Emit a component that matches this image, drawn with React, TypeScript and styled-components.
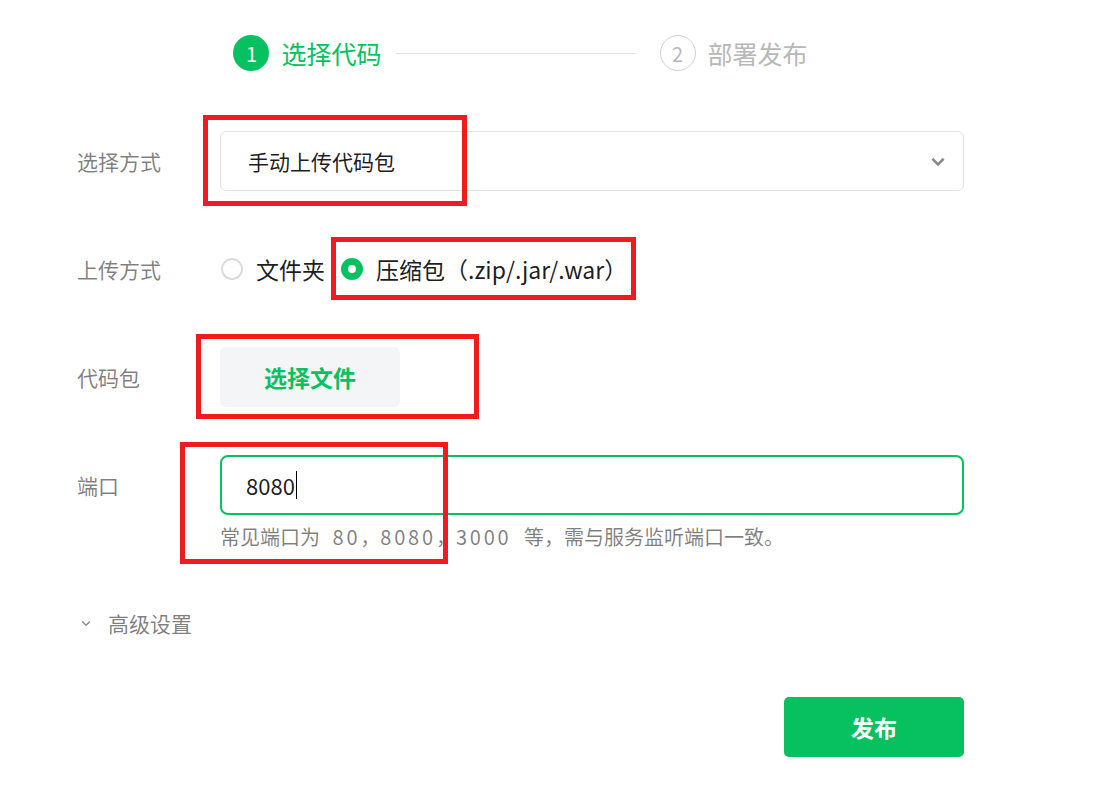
import React from 'react'
import styled, { createGlobalStyle } from 'styled-components'

const GlobalStyle = createGlobalStyle`
  body {
    margin: 0;
    background: #fff;
    font-family: "Noto Sans CJK SC", "Noto Sans", "Liberation Sans", sans-serif;
    color: rgba(0, 0, 0, 0.9);
  }
`

const Page = styled.div`
  position: relative;
  width: 1112px;
  height: 810px;
  overflow: hidden;
`

const Form = styled.div`
  width: 887px;
  padding: 35px 0 0 77px;
  display: flex;
  flex-direction: column;
`

const Steps = styled.div`
  display: flex;
  align-items: center;
  justify-content: center;
  height: 36px;
  margin-bottom: 60px;
`

const StepDot = styled.span<{ $active?: boolean }>`
  width: 36px;
  height: 36px;
  box-sizing: border-box;
  border-radius: 50%;
  display: flex;
  align-items: center;
  justify-content: center;
  font-size: 20px;
  background: ${(p) => (p.$active ? '#07c160' : '#fff')};
  border: ${(p) => (p.$active ? 'none' : '1.5px solid #d2d2d2')};
  color: ${(p) => (p.$active ? '#fff' : '#b8b8b8')};
`

const StepTitle = styled.span<{ $active?: boolean }>`
  font-size: 25px;
  margin-left: 12px;
  color: ${(p) => (p.$active ? '#07c160' : '#b8b8b8')};
`

const StepLine = styled.span`
  width: 239px;
  height: 1px;
  background: #e3e3e3;
  margin: 0 25px 0 14px;
`

const Row = styled.div<{ $last?: boolean }>`
  display: flex;
  align-items: flex-start;
  margin-bottom: ${(p) => (p.$last ? 0 : 48)}px;
`

const Label = styled.div`
  width: 143px;
  flex-shrink: 0;
  height: 60px;
  line-height: 60px;
  font-size: 21px;
  color: rgba(0, 0, 0, 0.5);
`

const Field = styled.div`
  flex: 1;
  display: flex;
  flex-direction: column;
`

const Select = styled.div`
  height: 60px;
  box-sizing: border-box;
  border: 1px solid #e4e4e4;
  border-radius: 6px;
  display: flex;
  align-items: center;
  justify-content: space-between;
  padding: 0 16px 0 27px;
  font-size: 21px;
`

const RadioGroup = styled.div`
  height: 60px;
  display: flex;
  align-items: center;
`

const RadioItem = styled.label`
  display: flex;
  align-items: center;
  font-size: 23px;
  margin-right: 15px;
`

const RadioCircle = styled.span<{ $checked?: boolean }>`
  width: 22px;
  height: 22px;
  box-sizing: border-box;
  border-radius: 50%;
  margin: 0 13px 0 1px;
  border: ${(p) => (p.$checked ? '7px solid #07c160' : '2px solid #dcdcdc')};
  background: #fff;
`

const FileButton = styled.button`
  width: 180px;
  height: 60px;
  border: none;
  border-radius: 6px;
  background: #f4f5f7;
  color: #07c160;
  font-family: inherit;
  font-size: 23px;
  font-weight: 700;
`

const Input = styled.div`
  height: 60px;
  box-sizing: border-box;
  border: 2px solid #07c160;
  border-radius: 8px;
  display: flex;
  align-items: center;
  padding-left: 24px;
  font-size: 22px;
`

const Caret = styled.span`
  width: 1.5px;
  height: 28px;
  background: #000;
  margin-left: 1px;
`

const Help = styled.div`
  margin-top: 10px;
  line-height: 24px;
  font-size: 20px;
  word-spacing: 8px;
  color: rgba(0, 0, 0, 0.5);
`

const Num = styled.span`
  letter-spacing: 2.8px;
`

const Advanced = styled.div`
  display: flex;
  align-items: center;
  height: 30px;
  margin-top: 59px;
  font-size: 21px;
  color: rgba(0, 0, 0, 0.5);
  gap: 16px;
  padding-left: 3px;
`

const Footer = styled.div`
  display: flex;
  justify-content: flex-end;
  margin-top: 59px;
`

const Primary = styled.button`
  width: 180px;
  height: 60px;
  border: none;
  border-radius: 5px;
  background: #07c160;
  color: #fff;
  font-family: inherit;
  font-size: 23px;
  font-weight: 700;
`

const Mark = styled.div<{ $x: number; $y: number; $w: number; $h: number }>`
  position: absolute;
  left: ${(p) => p.$x}px;
  top: ${(p) => p.$y}px;
  width: ${(p) => p.$w}px;
  height: ${(p) => p.$h}px;
  box-sizing: border-box;
  border: 5px solid #ee1b1f;
  pointer-events: none;
`

const Chevron = ({ size, color, width }: { size: number; color: string; width: number }) => (
  <svg width={size} height={size} viewBox="0 0 16 16">
    <path d="M3 6 L8 11 L13 6" fill="none" stroke={color} strokeWidth={width} />
  </svg>
)

export default function App() {
  return (
    <Page>
      <GlobalStyle />
      <Form>
        <Steps>
          <StepDot $active>1</StepDot>
          <StepTitle $active>选择代码</StepTitle>
          <StepLine />
          <StepDot>2</StepDot>
          <StepTitle>部署发布</StepTitle>
        </Steps>

        <Row>
          <Label>选择方式</Label>
          <Field>
            <Select>
              <span>手动上传代码包</span>
              <Chevron size={18} color="#8a8a8a" width={2.2} />
            </Select>
          </Field>
        </Row>

        <Row>
          <Label>上传方式</Label>
          <RadioGroup>
            <RadioItem>
              <RadioCircle />
              文件夹
            </RadioItem>
            <RadioItem>
              <RadioCircle $checked />
              压缩包（.zip/.jar/.war）
            </RadioItem>
          </RadioGroup>
        </Row>

        <Row>
          <Label>代码包</Label>
          <Field>
            <FileButton>选择文件</FileButton>
          </Field>
        </Row>

        <Row $last>
          <Label>端口</Label>
          <Field>
            <Input>
              8080
              <Caret />
            </Input>
            <Help>
              常见端口为 <Num>80</Num>，<Num>8080</Num>，<Num>3000</Num> 等，需与服务监听端口一致。
            </Help>
          </Field>
        </Row>

        <Advanced>
          <Chevron size={12} color="#8a8a8a" width={1.8} />
          高级设置
        </Advanced>

        <Footer>
          <Primary>发布</Primary>
        </Footer>
      </Form>

      <Mark $x={203} $y={115} $w={264} $h={91} />
      <Mark $x={331} $y={237} $w={305} $h={63} />
      <Mark $x={196} $y={334} $w={283} $h={85} />
      <Mark $x={180} $y={442} $w={268} $h={122} />
    </Page>
  )
}
